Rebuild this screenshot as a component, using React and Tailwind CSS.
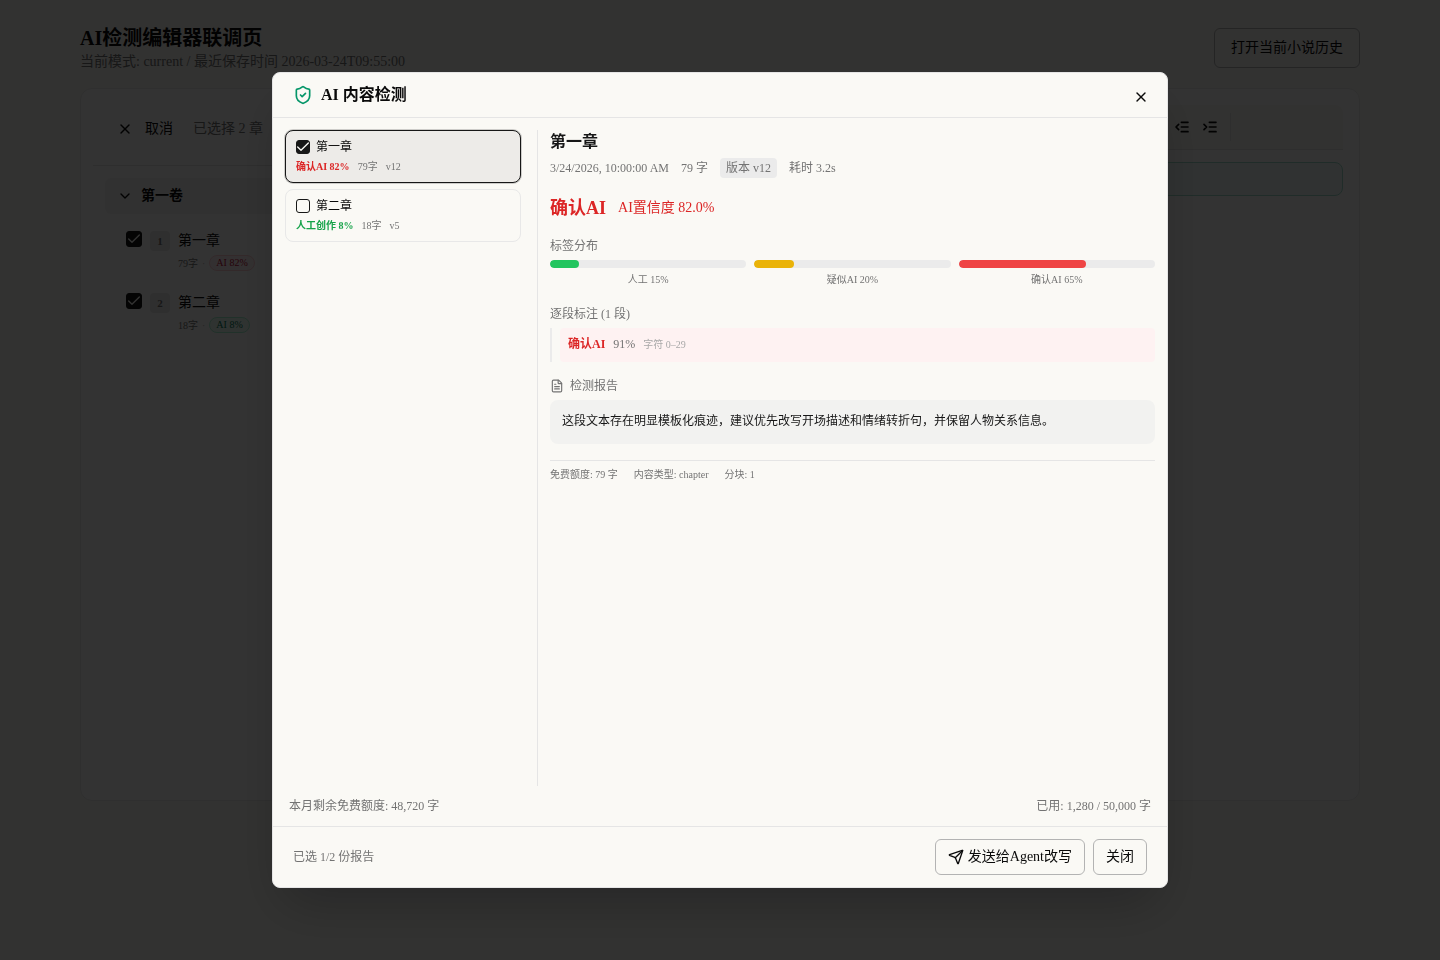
import React, { useState } from "react";
import {
  Check,
  ChevronDown,
  FileText,
  ListIndentDecrease,
  ListIndentIncrease,
  Send,
  ShieldCheck,
  X,
} from "lucide-react";

const chapters = [
  { id: 1, title: "第一章", words: 79, score: "AI 82%", tone: "border-[#fecdd3] bg-[#fff1f2] text-[#be123c]" },
  { id: 2, title: "第二章", words: 18, score: "AI 8%", tone: "border-[#a7f3d0] bg-[#ecfdf5] text-[#047857]" },
];

const reports = [
  { id: 1, title: "第一章", label: "确认AI 82%", words: 79, version: "v12", color: "text-[#dc2626]" },
  { id: 2, title: "第二章", label: "人工创作 8%", words: 18, version: "v5", color: "text-[#16a34a]" },
];

const distribution = [
  { name: "人工", value: 15, color: "bg-[#22c55e]" },
  { name: "疑似AI", value: 20, color: "bg-[#eab308]" },
  { name: "确认AI", value: 65, color: "bg-[#ef4444]" },
];

const Checkbox = ({ id, label, checked, onChange, size }) => (
  <span className={`relative inline-flex shrink-0 ${size}`}>
    <input
      type="checkbox"
      id={id}
      aria-label={label}
      checked={checked}
      onChange={onChange}
      className="size-full appearance-none rounded-[3px] border border-[#171717] checked:bg-[#171717]"
    />
    {checked && (
      <Check className="pointer-events-none absolute top-1/2 left-1/2 size-4 -translate-1/2 text-[#faf9f5]" />
    )}
  </span>
);

// Editor page that stays visible behind the dialog
const EditorPage = () => {
  const [picked, setPicked] = useState([1, 2]);

  const toggle = (id) => {
    setPicked((prev) => (prev.includes(id) ? prev.filter((x) => x !== id) : [...prev, id]));
  };

  return (
    <main className="mx-auto max-w-7xl py-6">
      <header className="flex items-center justify-between">
        <div>
          <h1 className="text-xl leading-7 font-bold">AI检测编辑器联调页</h1>
          <p className="text-sm leading-5 text-[#737373]">
            当前模式: current / 最近保存时间 2026-03-24T09:55:00
          </p>
        </div>
        <button type="button" className="h-10 rounded-md border border-[#b3b3b3] px-4 text-sm">
          打开当前小说历史
        </button>
      </header>

      <div className="mt-4 flex min-h-[713px] rounded-xl border border-[#ebebeb] bg-white">
        <aside className="ml-3 w-80 shrink-0">
          <div className="flex items-center gap-2 border-b border-[#e5e5e5] px-3 pt-5 pb-4">
            <button type="button" className="flex h-10 items-center gap-3 px-3 text-sm">
              <X className="size-4" />
              取消
            </button>
            <span className="text-sm text-[#737373]">已选择 {picked.length} 章</span>
          </div>
          <div className="px-3 pt-3">
            <button
              type="button"
              className="flex h-9 w-full items-center gap-2 rounded-md bg-[#f5f5f5] px-3 text-sm font-bold"
            >
              <ChevronDown className="size-4" />
              第一卷
            </button>
            <ul className="mt-[9px] flex flex-col gap-1.5 pl-[21px]">
              {chapters.map((chapter) => (
                <li key={chapter.id} className="flex gap-2 py-2">
                  <Checkbox
                    id={`chapter-${chapter.id}`}
                    label={chapter.title}
                    size="size-4"
                    checked={picked.includes(chapter.id)}
                    onChange={() => toggle(chapter.id)}
                  />
                  <span className="flex size-5 items-center justify-center rounded bg-[#ebebeb] text-[11px] font-bold text-[#737373]">
                    {chapter.id}
                  </span>
                  <div>
                    <div className="text-sm leading-5">{chapter.title}</div>
                    <div className="mt-1 flex h-4 items-center gap-1 text-[10px] text-[#737373]">
                      <span>{chapter.words}字</span>
                      <span className="text-[#b3b3b3]">·</span>
                      <span className={`rounded-full border px-1.5 leading-[14px] font-medium ${chapter.tone}`}>
                        {chapter.score}
                      </span>
                    </div>
                  </div>
                </li>
              ))}
            </ul>
          </div>
        </aside>

        <section className="min-w-0 flex-1 p-4">
          <div className="flex h-[45px] items-center justify-end rounded-t-lg border-b border-[#e5e5e5] bg-[#faf9f5] pr-28">
            <button type="button" aria-label="减少缩进" className="flex size-7 items-center justify-center">
              <ListIndentDecrease className="size-4" strokeWidth={2.5} />
            </button>
            <button type="button" aria-label="增加缩进" className="flex size-7 items-center justify-center">
              <ListIndentIncrease className="size-4" strokeWidth={2.5} />
            </button>
            <span className="ml-1.5 h-7 w-px bg-[#e5e5e5]" />
          </div>
          <div className="mt-3 h-[34px] rounded-lg border border-[#9fdccb] bg-[#edf8f7]" />
        </section>
      </div>
    </main>
  );
};

const ReportDetail = () => (
  <section className="min-w-0 flex-1 text-xs text-[#737373]">
    <h3 className="text-base leading-6 font-bold text-[#171717]">第一章</h3>
    <div className="mt-1 flex items-center gap-3">
      <span>3/24/2026, 10:00:00 AM</span>
      <span>79 字</span>
      <span className="rounded bg-[#ebebeb] px-1.5 py-0.5">版本 v12</span>
      <span>耗时 3.2s</span>
    </div>

    <div className="mt-4 flex items-center gap-3 text-[#dc2626]">
      <strong className="text-lg leading-7">确认AI</strong>
      <span className="text-sm">AI置信度 82.0%</span>
    </div>

    <h4 className="mt-4">标签分布</h4>
    <div className="mt-1.5 grid grid-cols-3 gap-2">
      {distribution.map((item) => (
        <div key={item.name}>
          <div className="h-2 overflow-hidden rounded-full bg-[#ebebeb]">
            <div className={`h-full rounded-full ${item.color}`} style={{ width: `${item.value}%` }} />
          </div>
          <div className="mt-1 pb-[3px] text-center text-[10px] leading-[15px]">
            {item.name} {item.value}%
          </div>
        </div>
      ))}
    </div>

    <h4 className="mt-4">逐段标注 (1 段)</h4>
    <div className="mt-1.5 border-l-2 border-[#ebebeb] pl-2">
      <div className="flex items-center gap-2 rounded-sm bg-[#fef2f2] px-2 pt-2 pb-2.5">
        <strong className="text-[#dc2626]">确认AI</strong>
        <span>91%</span>
        <span className="text-[10px] leading-[15px] text-[#a8a8a8]">字符 0–29</span>
      </div>
    </div>

    <h4 className="mt-4 flex items-center gap-1.5">
      <FileText className="size-3.5" />
      检测报告
    </h4>
    <p className="mt-1.5 rounded-lg bg-[#f2f2f0] px-3 pt-3 pb-3.5 leading-[18px] text-[#171717]">
      这段文本存在明显模板化痕迹，建议优先改写开场描述和情绪转折句，并保留人物关系信息。
    </p>

    <div className="mt-4 flex gap-4 border-t border-[#e5e5e5] pt-1.5 text-[10px] leading-[15px]">
      <span>免费额度: 79 字</span>
      <span>内容类型: chapter</span>
      <span>分块: 1</span>
    </div>
  </section>
);

const DetectionDialog = () => {
  const [selected, setSelected] = useState([1]);

  const toggle = (id) => {
    setSelected((prev) => (prev.includes(id) ? prev.filter((x) => x !== id) : [...prev, id]));
  };

  return (
    <div className="fixed inset-0 flex items-center justify-center bg-black/80">
      <div
        role="dialog"
        aria-labelledby="dialog-title"
        className="relative flex h-[85vh] w-full max-w-4xl flex-col rounded-lg border border-[#e5e5e5] bg-[#faf9f5] shadow-2xl"
      >
        <header className="flex h-[45px] shrink-0 items-center gap-2 border-b border-[#e5e5e5] px-5">
          <ShieldCheck className="size-5 text-[#059669]" />
          <h2 id="dialog-title" className="text-base leading-6 font-bold">
            AI 内容检测
          </h2>
        </header>
        <button
          type="button"
          aria-label="关闭对话框"
          className="absolute top-3.5 right-4 flex size-5 items-center justify-center"
        >
          <X className="size-4" />
        </button>

        <div className="flex min-h-0 flex-1 flex-col gap-3 p-3">
          <div className="flex min-h-0 flex-1 gap-3">
            <aside className="flex w-[253px] shrink-0 flex-col gap-1.5 border-r border-[#e5e5e5] pr-4">
              {reports.map((report) => (
                <div
                  key={report.id}
                  className={`rounded-lg border px-2.5 py-2 ${
                    report.id === 1
                      ? "border-[#171717] bg-[#edebe8] ring-1 ring-[#171717]/20"
                      : "border-[#e8e8e8]"
                  }`}
                >
                  <div className="flex h-4 items-center gap-1.5">
                    <Checkbox
                      id={`report-${report.id}`}
                      size="size-3.5"
                      checked={selected.includes(report.id)}
                      onChange={() => toggle(report.id)}
                    />
                    <label htmlFor={`report-${report.id}`} className="text-xs">
                      {report.title}
                    </label>
                  </div>
                  <div className="mt-1 flex gap-2 text-[10px] leading-[15px] text-[#737373]">
                    <strong className={report.color}>{report.label}</strong>
                    <span>{report.words}字</span>
                    <span>{report.version}</span>
                  </div>
                </div>
              ))}
            </aside>
            <ReportDetail />
          </div>
          <div className="flex justify-between px-1 text-xs text-[#737373]">
            <span>本月剩余免费额度: 48,720 字</span>
            <span>已用: 1,280 / 50,000 字</span>
          </div>
        </div>

        <footer className="flex items-center gap-2 border-t border-[#e5e5e5] px-5 py-3">
          <span className="mr-auto text-xs text-[#737373]">已选 {selected.length}/2 份报告</span>
          <button
            type="button"
            className="flex h-9 items-center gap-1 rounded-md border border-[#b3b3b3] px-3 text-sm"
          >
            <Send className="size-4" />
            发送给Agent改写
          </button>
          <button type="button" className="h-9 rounded-md border border-[#b3b3b3] px-3 text-sm">
            关闭
          </button>
        </footer>
      </div>
    </div>
  );
};

const App = () => (
  <div className="min-h-screen bg-[#faf9f5] font-['Liberation_Serif','Noto_Sans_CJK_SC',serif] text-[#0a0a0a]">
    <EditorPage />
    <DetectionDialog />
  </div>
);

export default App;
